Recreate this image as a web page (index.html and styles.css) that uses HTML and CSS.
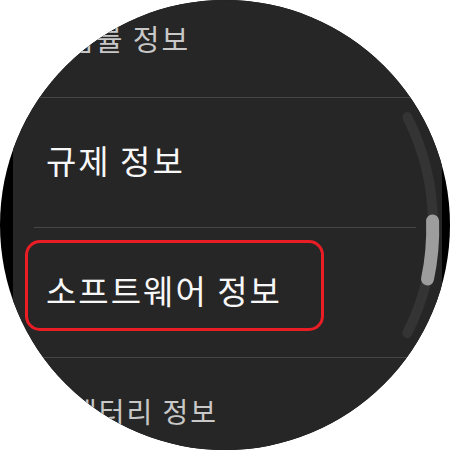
FILE: index.html
```html
<!DOCTYPE html>
<html>
<head>
    <meta charset="utf-8">
    <title>시계 정보</title>
    <link rel="stylesheet" href="styles.css">
</head>
<body>

<div class="watch">
    <div class="screen">
        <ul class="menu">
            <li class="item item-top">법률 정보</li>
            <li class="item">규제 정보</li>
            <li class="item item-selected">
                <span class="highlight">소프트웨어 정보</span>
            </li>
            <li class="item item-bottom">배터리 정보</li>
        </ul>
    </div>

    <!-- curved scroll indicator along the bezel -->
    <svg class="scrollbar" viewBox="0 0 450 450" width="450" height="450">
        <path class="track" d="M407.3 117 A240 240 0 0 1 407.3 333"/>
        <path class="thumb" d="M432.6 221 A240 240 0 0 1 427.5 279"/>
    </svg>
</div>

</body>
</html>
```

FILE: styles.css
```css
body {
    margin: 0;
    padding: 0;
    background-color: #fff;
    font-family: "Noto Sans CJK KR", "Noto Sans", sans-serif;
}

.watch {
    position: relative;
    width: 450px;
    height: 450px;
    box-sizing: border-box;
    padding: 0 8px 0 13px;
    border-radius: 50%;
    overflow: hidden;
    background-color: #000;
}

.screen {
    height: 100%;
    box-sizing: border-box;
    padding: 0 26px 0 21px;
    background-color: #262626;
}

.menu {
    list-style: none;
    margin: 0;
    padding: 0;
}

.item {
    box-sizing: border-box;
    height: 130px;
    padding: 46px 0 0 12px;
    border-bottom: 1px solid #464646;
    color: #f7f7f7;
    font-size: 33px;
    letter-spacing: 2px;
    line-height: 1;
}

.item-top {
    height: 98px;
    padding: 24px 0 0 33px;
    font-size: 29px;
    letter-spacing: 2px;
    color: #c8c8c8;
}

.item-selected {
    padding: 12px 0 0 0;
}

.item-bottom {
    border-bottom: none;
    padding: 39px 0 0 37px;
    font-size: 28px;
    letter-spacing: 2px;
    color: #c8c8c8;
}

.highlight {
    display: block;
    box-sizing: border-box;
    width: 299px;
    height: 91px;
    margin-left: -9px;
    padding: 31px 0 0 18px;
    border: 3px solid #ea1d25;
    border-radius: 15px;
}

.scrollbar {
    position: absolute;
    top: 0;
    left: 0;
    pointer-events: none;
}

.scrollbar path {
    fill: none;
    stroke-linecap: round;
}

.track {
    stroke: #343434;
    stroke-width: 10;
}

.thumb {
    stroke: #9d9d9d;
    stroke-width: 13;
}
```
